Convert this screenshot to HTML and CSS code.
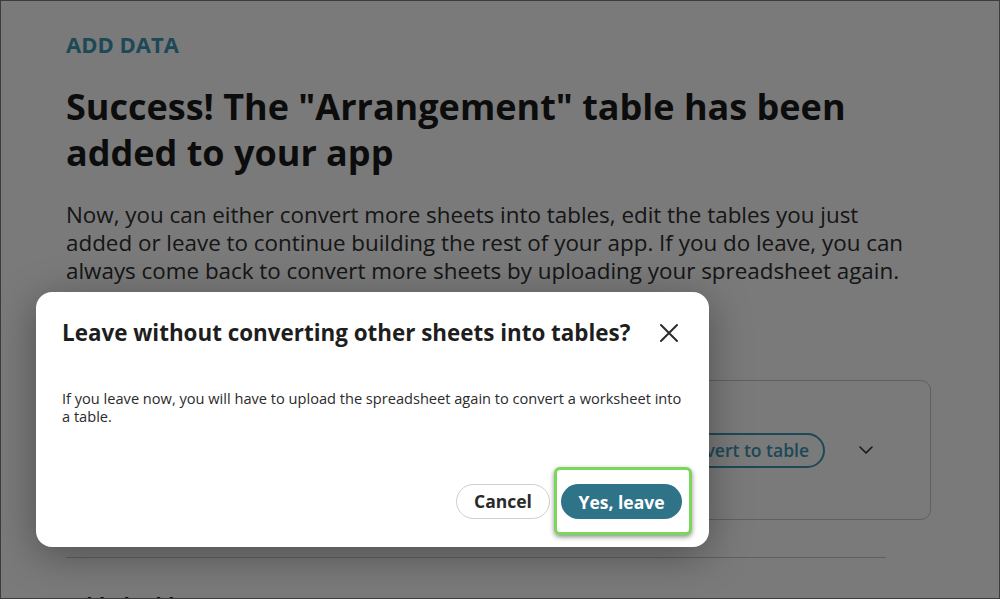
FILE: index.html
```html
<!DOCTYPE html>
<html lang="en">
<head>
<meta charset="utf-8">
<title>Add data</title>
<link rel="stylesheet" href="styles.css">
</head>
<body>
<div class="frame">
  <main class="page">
    <div class="eyebrow">ADD DATA</div>
    <h1 class="title">Success! The "Arrangement" table has been added to your app</h1>
    <p class="lead">Now, you can either convert more sheets into tables, edit the tables you just added or leave to continue building the rest of your app. If you do leave, you can always come back to convert more sheets by uploading your spreadsheet again.</p>
    <div class="sheet-card">
      <div class="sheet-name"></div>
      <div class="sheet-actions">
        <button class="btn-outline">Convert to table</button>
        <svg class="chev" width="14" height="8" viewBox="0 0 14 8"><path d="M1 1l6 6 6-6" fill="none" stroke="#333" stroke-width="1.6" stroke-linecap="round" stroke-linejoin="round"/></svg>
      </div>
    </div>
    <hr class="divider">
    <h2 class="section-next">Added tables</h2>
  </main>

  <div class="scrim"></div>

  <div class="modal" role="dialog">
    <div class="modal-head">
      <h3 class="modal-title">Leave without converting other sheets into tables?</h3>
      <svg class="close" width="20" height="20" viewBox="0 0 20 20"><path d="M2 2l16 16M18 2L2 18" stroke="#2b2b2b" stroke-width="2" stroke-linecap="round"/></svg>
    </div>
    <p class="modal-body">If you leave now, you will have to upload the spreadsheet again to convert a worksheet into a table.</p>
    <div class="modal-foot">
      <button class="btn-cancel">Cancel</button>
      <span class="highlight"><button class="btn-primary">Yes, leave</button></span>
    </div>
  </div>
</div>
</body>
</html>
```

FILE: styles.css
```css
* { box-sizing: border-box; }
html, body { margin: 0; padding: 0; }
body {
  font-family: "Open Sans", "Noto Sans", sans-serif;
  background: #fff;
  color: #1a1a1a;
  overflow: hidden;
}
.frame {
  position: relative;
  width: 1000px;
  height: 599px;
  border: 1px solid #3c3c3c;
  overflow: hidden;
  background: #fff;
}
.page {
  padding: 28px 0 0 65px;
  width: 930px;
}
.eyebrow {
  font-size: 22px;
  line-height: 30px;
  font-weight: 700;
  color: #3d98b6;
}
.title {
  margin: 25px 0 0;
  font-size: 36px;
  line-height: 46px;
  font-weight: 700;
  color: #1a1a1a;
  width: 845px;
}
.lead {
  margin: 25px 0 0;
  font-size: 22.4px;
  line-height: 28px;
  color: #2e2e2e;
  width: 848px;
}
.sheet-card {
  margin-top: 95px;
  width: 865px;
  height: 140px;
  border: 1.5px solid #c8c8c8;
  border-radius: 10px;
  display: flex;
  align-items: center;
  justify-content: space-between;
  padding: 0 57px 0 24px;
}
.sheet-actions {
  display: flex;
  align-items: center;
  gap: 34px;
}
.btn-outline {
  font-family: inherit;
  font-size: 17.5px;
  font-weight: 600;
  color: #3d98b6;
  background: #fff;
  border: 2px solid #3d98b6;
  border-radius: 18px;
  height: 35px;
  padding: 0 14px 0 18px;
}
.divider {
  margin: 37px 0 0;
  width: 820px;
  border: 0;
  border-top: 1.5px solid #c8c8c8;
}
.section-next {
  margin: 33px 0 0;
  font-size: 20px;
  line-height: 28px;
}
.scrim {
  position: absolute;
  inset: 0;
  background: rgba(0, 0, 0, 0.52);
}
.modal {
  position: absolute;
  left: 35px;
  top: 291px;
  width: 673px;
  height: 255px;
  background: #fff;
  border-radius: 16px;
  box-shadow: 0 8px 40px rgba(0, 0, 0, 0.35);
  padding: 27px 17px 12px 26px;
  display: flex;
  flex-direction: column;
}
.modal-head {
  display: flex;
  align-items: center;
  justify-content: space-between;
  padding-right: 13px;
}
.modal-title {
  margin: 0;
  font-size: 22.4px;
  line-height: 28px;
  font-weight: 700;
  color: #1e1e1e;
}
.close { flex: none; }
.modal-body {
  margin: 42px 0 0;
  font-size: 14.6px;
  line-height: 18px;
  color: #2b2b2b;
  width: 625px;
  flex: 1;
}
.modal-foot {
  display: flex;
  justify-content: flex-end;
  align-items: center;
  gap: 4px;
}
.btn-cancel {
  font-family: inherit;
  font-size: 17.5px;
  font-weight: 700;
  color: #2a2a2a;
  background: #fff;
  border: 1.5px solid #cfcfcf;
  border-radius: 18px;
  height: 35px;
  width: 94px;
}
.highlight {
  display: inline-flex;
  padding: 14px 7px 13px 4px;
  border: 3px solid #7bd75b;
  border-radius: 6px;
  box-shadow: 0 2px 5px rgba(0, 0, 0, 0.45);
  background: #fff;
}
.btn-primary {
  font-family: inherit;
  font-size: 17.5px;
  font-weight: 700;
  color: #fff;
  background: #2f7389;
  border: 0;
  border-radius: 18px;
  height: 35px;
  width: 121px;
}
```
